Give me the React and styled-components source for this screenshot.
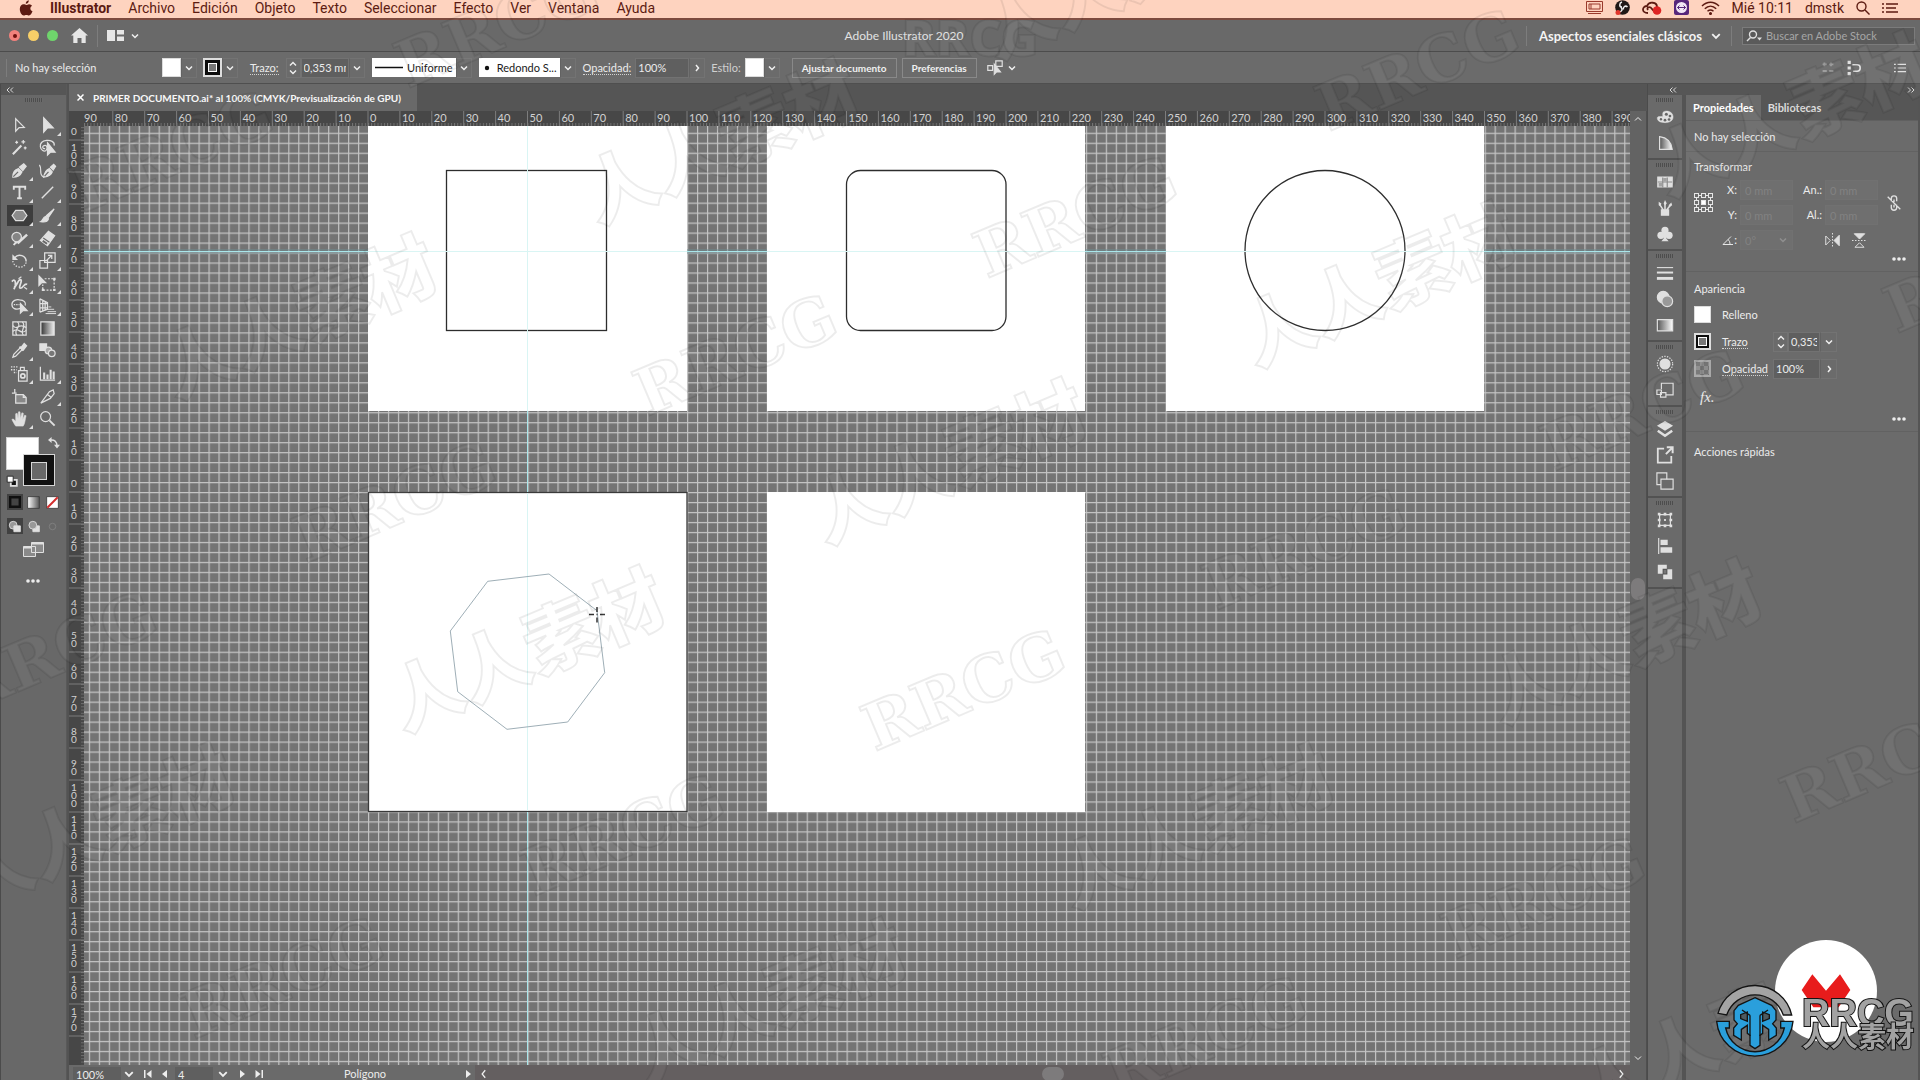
import React from "react";
import styled, { createGlobalStyle, css } from "styled-components";

const Global = createGlobalStyle`
  * { box-sizing: border-box; }
  html, body { margin: 0; height: 100%; background: #6a6a6a; overflow: hidden; }
  #root { height: 100%; }
  body, button, input, select { font-family: Lato, "Open Sans", "Noto Sans CJK SC", sans-serif; font-size: 11px; color: #ececec; }
  button { background: none; border: 0; padding: 0; margin: 0; }
  input { margin: 0; outline: 0; min-width: 0; }
  svg { display: block; flex: none; }
`;

const Shell = styled.div`
  height: 100vh;
  display: flex;
  flex-direction: column;
  line-height: 14px;
`;

/* ---------- system menu bar ---------- */
const MenuBar = styled.nav`
  height: 20px;
  flex: none;
  display: flex;
  align-items: center;
  padding: 0 21px 3px 19px;
  background: #fed3bf;
  border-bottom: 2px solid #7c4a3e;
`;
const MenuItem = styled.button`
  font-family: Roboto, sans-serif;
  font-size: 14px;
  line-height: 16px;
  color: #5c1b12;
  margin-right: 17px;
  font-weight: ${(p) => (p.$bold ? 700 : 400)};
`;
const MenuTray = styled.div`
  margin-left: auto;
  display: flex;
  align-items: center;
  gap: 12px;
  color: #5c1b12;
  font-family: Roboto, sans-serif;
  font-size: 14px;
`;

/* ---------- title bar ---------- */
const TitleBar = styled.header`
  height: 32px;
  flex: none;
  display: grid;
  grid-template-columns: 1fr auto 1fr;
  align-items: center;
  background: #696969;
  border-bottom: 1px solid #4c4c4c;
`;
const TitleLeft = styled.div`
  display: flex;
  align-items: center;
  padding-left: 9px;
`;
const Light = styled.button`
  width: 11px;
  height: 11px;
  border-radius: 50%;
  margin-right: 8px;
  background: ${(p) => p.$color};
  display: grid;
  place-items: center;
  &::after {
    content: "";
    width: 4px;
    height: 4px;
    border-radius: 50%;
    background: ${(p) => p.$dot || "transparent"};
  }
`;
const Title = styled.h1`
  margin: 0 112px 0 0;
  font-size: 12px;
  font-weight: 400;
  color: #e2e2e2;
`;
const TitleRight = styled.div`
  display: flex;
  justify-content: flex-end;
  align-items: center;
  padding-right: 5px;
`;
const VRule = styled.span`
  width: 1px;
  height: ${(p) => p.$h || 20}px;
  background: #7d7d7d;
  margin: 0 ${(p) => p.$gap || 9}px;
`;
const Workspace = styled.button`
  display: flex;
  align-items: center;
  gap: 9px;
  font-size: 13px;
  font-weight: 700;
  color: #f4f4f4;
`;
const StockSearch = styled.label`
  width: 173px;
  height: 18px;
  display: flex;
  align-items: center;
  gap: 3px;
  padding-left: 3px;
  background: #5a5a5a;
  border: 1px solid #7b7b7b;
  input {
    flex: 1;
    background: none;
    border: 0;
    padding: 0;
    color: #ddd;
    font-size: 11px;
  }
  input::placeholder { color: #a6a6a6; opacity: 1; }
`;

/* ---------- control bar ---------- */
const ControlBar = styled.div`
  height: 32px;
  flex: none;
  display: flex;
  align-items: center;
  padding: 0 14px 0 5px;
  background: #6b6b6b;
  border-bottom: 1px solid #4f4f4f;
`;
const StatusText = styled.span`
  width: 147px;
  padding-left: 7px;
`;
const Swatch = styled.button`
  width: ${(p) => p.$size || 19}px;
  height: ${(p) => p.$size || 19}px;
  flex: none;
  background: #fff;
  border: 1px solid #dcdcdc;
  ${(p) =>
    p.$stroke &&
    css`
      background: #0c0c0c;
      border: 2px solid #dedede;
      display: grid;
      place-items: center;
      &::after {
        content: "";
        width: 7px;
        height: 7px;
        border: 1px solid #fff;
        background: #777;
      }
    `}
`;
const Drop = styled.button`
  width: ${(p) => p.$w || 16}px;
  height: 20px;
  flex: none;
  display: grid;
  place-items: center;
  border: 1px solid #737373;
  border-left-color: #626262;
`;
const Spin = styled.button`
  width: 15px;
  height: 20px;
  flex: none;
  display: grid;
  place-items: center;
  border: 1px solid #747474;
`;
const Field = styled.input`
  width: ${(p) => p.$w}px;
  height: 20px;
  padding: 0 2px;
  background: #5f5f5f;
  border: 1px solid #727272;
  &:disabled {
    padding-left: 4px;
    background: #6f6f6f;
    color: #828282;
    border-color: #717171;
  }
`;
const Dotted = styled.label`
  border-bottom: 1px dotted #d2d2d2;
  line-height: 13px;
`;
const Plain = styled.span`
  color: #d0d0d0;
`;
const WhiteCombo = styled.button`
  width: ${(p) => p.$w}px;
  height: 19px;
  display: flex;
  align-items: center;
  justify-content: space-between;
  padding: 0 3px;
  background: #fff;
  color: #1a1a1a;
`;
const BarButton = styled.button`
  height: 20px;
  padding: 0 9px;
  border: 1px solid #898989;
  font-size: 10px;
  font-weight: 700;
  color: #f0f0f0;
`;
const Gap = styled.span`
  width: ${(p) => p.$w}px;
  flex: none;
`;
const BarRight = styled.div`
  margin-left: auto;
  display: flex;
  align-items: center;
  gap: 12px;
`;

/* ---------- body columns ---------- */
const Body = styled.div`
  flex: 1;
  min-height: 0;
  display: flex;
  background: #535353;
`;
const Tools = styled.aside`
  width: 67px;
  flex: none;
  background: #686868;
  border-left: 1px solid #4b4b4b;
  border-right: 1px solid #595959;
  display: flex;
  flex-direction: column;
  align-items: center;
`;
const Collapse = styled.div`
  height: 11px;
  flex: none;
  width: 100%;
  background: #565656;
  display: flex;
  align-items: center;
  padding: 0 5px;
  justify-content: ${(p) => p.$justify || "flex-start"};
`;
const Grip = styled.span`
  height: 4px;
  width: 18px;
  flex: none;
  margin-top: ${(p) => p.$top}px;
  background: repeating-linear-gradient(90deg, #4d4d4d 0 1px, #6b6b6b 1px 2px);
`;
const ToolGrid = styled.div`
  display: grid;
  grid-template-columns: 28px 28px;
  grid-auto-rows: 1fr;
  height: 316px;
  margin-top: 12px;
`;
const Tool = styled.button`
  position: relative;
  display: grid;
  place-items: center;
  margin: 1px;
  background: ${(p) => (p.$active ? "#3d3d3d" : "none")};
  ${(p) =>
    p.$more &&
    css`
      &::after {
        content: "";
        position: absolute;
        right: 0;
        bottom: 0;
        border: 2px solid;
        border-color: transparent #dedede #dedede transparent;
      }
    `}
`;
const FillStroke = styled.div`
  position: relative;
  width: 56px;
  height: 57px;
  margin-top: 7px;
`;
const FillBox = styled.button`
  position: absolute;
  left: 0;
  top: 0;
  width: 33px;
  height: 33px;
  background: #fff;
  border: 1px solid #cfcfcf;
`;
const StrokeBox = styled.button`
  position: absolute;
  left: 17px;
  top: 17px;
  width: 32px;
  height: 32px;
  background: #111;
  border: 1px solid #d6d6d6;
  padding: 7px;
  &::after {
    content: "";
    display: block;
    height: 16px;
    border: 1px solid #d6d6d6;
    background: #686868;
  }
`;
const Swap = styled.button`
  position: absolute;
  right: 2px;
  top: 0;
`;
const Default = styled.button`
  position: absolute;
  left: 0;
  bottom: 7px;
`;
const ModeRow = styled.div`
  display: flex;
  gap: 3px;
  height: 16px;
  margin-bottom: 8px;
`;
const Mode = styled.button`
  width: 16px;
  height: 16px;
  display: grid;
  place-items: center;
  background: ${(p) => (p.$active ? "#414141" : "none")};
`;
const ToolsMore = styled.button`
  margin-top: 22px;
`;

/* ---------- document ---------- */
const Doc = styled.main`
  flex: 1;
  min-width: 0;
  margin-left: 2px;
  display: flex;
  flex-direction: column;
`;
const DocTabs = styled.div`
  height: 27px;
  flex: none;
  display: flex;
  background: #555;
`;
const DocTab = styled.div`
  display: flex;
  align-items: center;
  gap: 9px;
  padding: 0 16px 0 8px;
  background: #696969;
  font-size: 10px;
  font-weight: 700;
  color: #f8f8f8;
  white-space: nowrap;
`;
const DocArea = styled.div`
  flex: 1;
  min-height: 0;
  display: grid;
  grid-template-columns: 15px 1fr 17px;
  grid-template-rows: 15px 1fr 15px;
  svg { width: 100%; height: 100%; }
`;
const Corner = styled.div`
  background: #484848;
`;
const Pane = styled.div`
  min-width: 0;
  min-height: 0;
  overflow: hidden;
  background: ${(p) => p.$bg};
`;
const RulerText = styled.text`
  font-family: Lato, sans-serif;
  font-size: ${(p) => p.$size}px;
  fill: #d2d2d2;
`;
const VScroll = styled.div`
  grid-column: 3;
  grid-row: 1 / span 3;
  background: #636363;
  display: flex;
  flex-direction: column;
  align-items: center;
  justify-content: space-between;
  padding: 4px 0 18px;
  border-right: 1px solid #4f4f4f;
  svg { width: 8px; height: 8px; }
`;
const Thumb = styled.span`
  width: ${(p) => p.$w}px;
  height: ${(p) => p.$h}px;
  border-radius: 8px;
  background: #7d7b7c;
`;
const StatusBar = styled.div`
  grid-column: 1 / span 2;
  display: grid;
  grid-template-columns: 406px 1fr;
  background: #6a6a6a;
  svg { width: 10px; height: 10px; }
`;
const StatusLeft = styled.div`
  display: flex;
  align-items: center;
  padding-left: 4px;
  padding-top: 2px;
`;
const StatusField = styled.input`
  width: ${(p) => p.$w}px;
  height: 14px;
  padding: 0 3px;
  border: 0;
  background: #5f5f5f;
`;
const StatusBtn = styled.button`
  width: ${(p) => p.$w || 16}px;
  display: grid;
  place-items: center;
`;
const StatusTool = styled.span`
  width: 196px;
  text-align: center;
`;
const HScroll = styled.div`
  background: #645f60;
  display: flex;
  align-items: center;
  justify-content: space-between;
  padding: 2px 4px 0;
`;

/* ---------- right side ---------- */
const Side = styled.aside`
  width: 273px;
  flex: none;
  display: flex;
  flex-direction: column;
  border-left: 1px solid #4b4b4b;
`;
const SideTop = styled.div`
  display: grid;
  grid-template-columns: 34px 1fr;
`;
const SideBody = styled.div`
  flex: 1;
  min-height: 0;
  display: grid;
  grid-template-columns: 34px 1fr;
  column-gap: 4px;
  background: #545454;
`;
const Dock = styled.div`
  background: #6a6a6a;
`;
const DockGroup = styled.div`
  display: flex;
  flex-direction: column;
  align-items: center;
  padding: 3px 0 2px;
  border-bottom: 2px solid #525252;
`;
const DockButtons = styled.div`
  width: 100%;
  margin-top: 2px;
`;
const DockButton = styled.button`
  width: 100%;
  height: 26px;
  display: grid;
  place-items: center;
`;
const Panel = styled.div`
  background: #6b6b6b;
  border-right: 2px solid #555;
`;
const PanelTabs = styled.div`
  height: 26px;
  display: flex;
  background: #565656;
  border-bottom: 1px solid #606060;
`;
const PanelTab = styled.button`
  padding: 0 7px;
  font-weight: 700;
  color: ${(p) => (p.$active ? "#fff" : "#dcdcdc")};
  background: ${(p) => (p.$active ? "#6b6b6b" : "none")};
`;
const Section = styled.section`
  padding: ${(p) => p.$pad};
  border-bottom: ${(p) => (p.$last ? 0 : 1)}px solid #626262;
`;
const SectionTitle = styled.h2`
  margin: 0;
  font-size: 11px;
  font-weight: 400;
`;
const TransformGrid = styled.div`
  display: grid;
  grid-template-columns: 20px 20px 53px 26px 53px 1fr;
  grid-template-rows: 20px 20px 20px;
  row-gap: 5px;
  column-gap: 3px;
  align-items: center;
  margin: 6px 0 2px;
`;
const FieldLabel = styled.label`
  grid-column: ${(p) => p.$col};
  display: flex;
  justify-content: flex-end;
  align-items: center;
  gap: 1px;
`;
const Span2 = styled.button`
  grid-row: 1 / span 2;
  grid-column: ${(p) => p.$col};
  justify-self: start;
  padding-left: ${(p) => (p.$col === 6 ? 4 : 0)}px;
`;
const AngleBox = styled.div`
  position: relative;
  svg { position: absolute; right: 6px; top: 6px; opacity: 0.25; }
`;
const Flips = styled.div`
  grid-column: 5;
  display: flex;
  gap: 12px;
`;
const MoreRow = styled.div`
  height: 14px;
  display: flex;
  justify-content: flex-end;
  align-items: center;
  padding-right: 11px;
`;
const LookRows = styled.div`
  padding-top: 5px;
`;
const LookRow = styled.div`
  height: 27px;
  display: flex;
  align-items: center;
`;
const LookLabel = styled.div`
  width: 51px;
  margin-left: 11px;
`;
const Fx = styled.button`
  height: 30px;
  padding-left: 6px;
  font-family: "Liberation Serif", serif;
  font-style: italic;
  font-size: 15px;
`;
const Checker = styled.button`
  width: 17px;
  height: 17px;
  flex: none;
  border: 2px solid #a8a8a8;
  background: repeating-conic-gradient(#8c8c8c 0 25%, #747474 0 50%) 0 0 / 8px 8px;
`;

/* ---------- overlays ---------- */
const Marks = styled.svg`
  position: fixed;
  inset: 0;
  width: 100%;
  height: 100%;
  pointer-events: none;
`;
const MARK_FONT = {
  slab: ['"DejaVu Serif", serif', 64],
  sans: ['"Noto Sans", sans-serif', 50],
  cjk: ['"Noto Sans CJK SC", sans-serif', 73],
};
const MarkText = styled.text`
  font-family: ${(p) => MARK_FONT[p.$kind][0]};
  font-size: ${(p) => MARK_FONT[p.$kind][1]}px;
  font-weight: 900;
  text-anchor: middle;
  fill: rgba(255, 255, 255, 0.045);
  stroke: rgba(0, 0, 0, 0.075);
  stroke-width: 2px;
`;
const Brand = styled.svg`
  position: fixed;
  right: 0;
  bottom: 0;
  pointer-events: none;
`;
const BrandText = styled.text`
  font-family: "Liberation Sans", "Noto Sans CJK SC", sans-serif;
  font-weight: 700;
  font-size: ${(p) => p.$size}px;
  fill: #a2a2a2;
  stroke: #141414;
  stroke-width: 2px;
  paint-order: stroke;
`;

/* ---------- icons ---------- */
const Ic = ({ s = 20, c = "#e0e0e0", w = 1.3, children }) => (
  <svg width={s} height={s} viewBox="0 0 20 20" fill="none" stroke={c} strokeWidth={w} aria-hidden="true">
    {children}
  </svg>
);
const Chev = ({ d = "down", s = 8, w = 1.5 }) => {
  const paths = { down: "M1 2.5 4 5.5 7 2.5", up: "M1 5.5 4 2.5 7 5.5", right: "M3 1 5.5 4 3 7", left: "M5 1 2.5 4 5 7" };
  return (
    <svg width={s} height={s} viewBox="0 0 8 8" fill="none" stroke="#f0f0f0" strokeWidth={w} aria-hidden="true">
      <path d={paths[d]} />
    </svg>
  );
};
const SpinIcon = () => (
  <svg width="8" height="14" viewBox="0 0 8 14" fill="none" stroke="#f0f0f0" strokeWidth="1.4" aria-hidden="true">
    <path d="M1 4.5 4 1.5 7 4.5M1 9.5 4 12.5 7 9.5" />
  </svg>
);
const Double = ({ flip }) => (
  <svg width="8" height="6" viewBox="0 0 8 6" fill="none" stroke="#d8d8d8" aria-hidden="true">
    <path d={flip ? "M1 .5 3.5 3 1 5.5M4.500 .5 7 3 4.500 5.500" : "M3.500 .5 1 3 3.500 5.500M7 .5 4.500 3 7 5.500"} />
  </svg>
);
const Dots = () => (
  <svg width="15" height="4" viewBox="0 0 15 4" fill="#ededed" aria-hidden="true">
    <circle cx="2" cy="2" r="1.800" />
    <circle cx="7" cy="2" r="1.800" />
    <circle cx="12" cy="2" r="1.800" />
  </svg>
);
const L = "#e0e0e0";

const TOOLS = [
  ["Selección", 0, <path d="M6 3v13l3.600-3.800L15 12z" />],
  ["Selección directa", 1, <path d="M6 2v15l4-4.500h6z" fill={L} />],
  ["Varita mágica", 0, <><path d="M3 17 12 8" strokeWidth="2.200" /><path d="M14 2v4M12 4h4M7 3v3M5.500 4.500h3M16 9v3M14.500 10.500h3" /></>],
  ["Lazo", 0, <><path d="M17 8c1-4-4-6-8-5.500S2 5 2.500 9s4 6 6 4 1-6-2-5-1 4 1 3" /><path d="M10 5v13l3-3h5z" fill={L} /></>],
  ["Pluma", 1, <><path d="M3 17c0-5 2-8 6-9l3.500 3.500C11 15 8 17 3 17z" fill={L} /><path d="M10 6.500 13.500 10 17 5.500 14.500 3z" fill={L} /><path d="m3.500 16.500 5-5" stroke="#686868" /></>],
  ["Curvatura", 0, <><path d="M6 17c1-5 3-8 6-9l3 3.500C14 15 11 16.500 6 17z" fill={L} /><path d="M13 6.500 16 9.500 18.500 5.500 16.500 3.500z" fill={L} /><path d="M6 17C0 14 5 9 1.500 4" /><path d="m7 16 4-4.500" stroke="#686868" /></>],
  ["Texto", 1, <path d="M4 7V4h12v3M10 4v12M7.500 16h5" strokeWidth="2" />],
  ["Línea", 1, <path d="M4 16 16 4" strokeWidth="1.500" />],
  ["Polígono", 1, <path d="M6 4.500h8l3.800 5.500-3.800 5.500H6L2.200 10z" fill="#8c8c8c" />, true],
  ["Pincel", 1, <><path d="M17 3 9 10l2 2z" fill={L} /><path d="M8.500 11 11 13.500C10 17 6 17 3 16.500c2-1 2-5 5.500-5.500z" fill={L} /></>],
  ["Forma", 1, <><circle cx="7" cy="8.500" r="5" fill="#858585" /><path d="m8 15 10-9" strokeWidth="2.600" /><path d="M4 17c1-2 2-3 4-3" strokeWidth="2" /></>],
  ["Borrador", 1, <><path d="M2.500 12 11 2.500l6.500 4.500L10 17.500z" fill={L} /><path d="m5.500 9.500 6.500 4.500" stroke="#686868" /><path d="m5 12.500 4.500 3" stroke="#686868" strokeWidth="2" /></>],
  ["Rotar", 1, <><path d="M5 7c4-5 12-2 12 4" strokeWidth="1.600" /><path d="M17 12c-1 4-5 6-9 4.500S3 12 3 10" strokeDasharray="1.500 1.500" /><path d="M2.500 3.500v6h6z" fill={L} stroke="none" /></>],
  ["Escala", 1, <><path d="M7 2h11v10H7z" /><path d="M2 10h8v8H2zM9 10l5-5M10.500 4.500h4v4" /></>],
  ["Anchura", 1, <><path d="M2 8c4-5 5 4 2 8M4 14c3 0 4-8 7-8s-3 9 0 9 4-6 7-4" strokeWidth="1.800" /><path d="m9 5 3-2M15 14l3 2" /></>],
  ["Transformación libre", 1, <><path d="M7 5h10v12H5v-6" strokeDasharray="2 1.500" /><path d="M1 2v10l3-3h4z" fill={L} /><path d="M16 4h2.500v2.500H16zM16 15.500h2.500V18H16zM4 15.500h2.500V18H4z" fill={L} stroke="none" /></>],
  ["Creador de formas", 1, <><path d="M11 13c-5 2-9 0-9-4s5-6 8-5c5 0 7 3 6 6" /><path d="M4 9h6" strokeDasharray="1.500 1" /><path d="M11 8v10l2.700-2.700H18z" fill={L} /></>],
  ["Perspectiva", 1, <><path d="M2 3v14M2 3l8 4v7l-8 3M5 4.500v11M7.500 6v8.500M2 8h8M2 12.500h8" /><path d="M10 16.500h9M10 14h7M11 11.500h3M8 18.500h11" strokeWidth="1" /></>],
  ["Malla", 0, <><path d="M3 3h14v14H3z" /><path d="M3 7c5 6 6-4 14 2M3 13c6-6 8 5 14-1M8 3c5 6-5 7-1 14M13 3c5 5-3 9 1 14" /></>],
  ["Degradado", 0, <><defs><linearGradient id="gt"><stop stopColor="#333" /><stop offset="1" stopColor="#eee" /></linearGradient></defs><path d="M3 3h14v14H3z" fill="url(#gt)" /></>],
  ["Cuentagotas", 1, <><path d="M3 17l1-3 7-7 2 2-7 7z" /><path d="m10 6 4 4M12 7l3-4 2 2-3 4z" strokeWidth="2" fill={L} /></>],
  ["Fusión", 0, <><path d="M2 3h7v7H2z" fill={L} /><circle cx="11" cy="10" r="3.500" fill="#aaa" /><circle cx="14.500" cy="13" r="3.500" fill="#777" /></>],
  ["Rociar símbolos", 1, <><path d="M9 7h9v11H9zM11 7V3.500h4V7" /><circle cx="13.500" cy="12.500" r="2.200" strokeWidth="1.800" /><path d="M1 3h8M1 6h6M4 9h3" strokeDasharray="1.500 1.200" strokeWidth="1.500" /></>],
  ["Gráfica", 1, <><path d="M2.500 3v14H18" /><path d="M6.500 16V9M10 16V11M13.300 16V6M16.500 16V8" strokeWidth="2.200" /></>],
  ["Mesa de trabajo", 0, <path d="M5 2v4M2 6.500h5M6 8h8l3 3v6H6zM14 8v3h3" fill="#888" />],
  ["Sector", 1, <path d="M3 17 12 5l4-2 1 4-4 5zM10 8l4 3" />],
  ["Mano", 1, <path d="M6 18c-2-3-3-5-4-7l1.500-.5L6 13V5l1.500-.5L8.500 10 9 3h1.500l.6 7 1.400-6 1.500.4-.6 6.600 2-4.500 1.500.5c-1 4-1 8-3 11z" fill={L} strokeWidth=".6" />],
  ["Zoom", 0, <><circle cx="8" cy="8" r="5.200" /><path d="m12 12 5.500 5.500" strokeWidth="2" /></>],
];

const DOCK = [
  [
    ["Color", <><path d="M10.500 3.500C15.500 3 19 6 19 10c0 5-6 7-11 6-5 0-7-3-6.500-5.500C3 8 7 11 7.500 8.500 7.500 6 7 4 10.500 3.500z" fill={L} strokeWidth=".5" /><g fill="#666" stroke="none"><circle cx="11.500" cy="7" r="1.700" /><circle cx="15.500" cy="9" r="1.500" /><circle cx="14.500" cy="12.800" r="1.500" /><circle cx="10" cy="13.500" r="1.500" /><circle cx="5.500" cy="12.500" r="1.300" /></g></>],
    ["Guía de color", <><defs><linearGradient id="gc"><stop stopColor="#555" /><stop offset="1" stopColor="#fff" /></linearGradient></defs><path d="M4 3v14h14C17 9 12 4 4 3z" fill="url(#gc)" /></>],
  ],
  [
    ["Muestras", <><path d="M2 4.500h16v11H2z" fill={L} /><path d="M2 10h16M7.500 5v11M12.500 5v11" stroke="#8a8a8a" /><path d="M8 5.500h4v4H8zM3 11h4v4H3z" fill="#a2a2a2" stroke="none" /></>],
    ["Pinceles", <><path d="M6 12h8v6H6z" fill={L} /><path d="M8 12 4 6M10 12V4M12 12l4-5" strokeWidth="1.700" /><path d="M3 3l3 2-1 3-2-1zM10 1l2 4-2 2-1.500-2zM17 4l-3 3 1 2 3-2z" fill={L} stroke="none" /></>],
    ["Símbolos", <g fill={L} stroke="none"><circle cx="10" cy="6" r="4" /><circle cx="5.500" cy="11.500" r="4" /><circle cx="14.500" cy="11.500" r="4" /><path d="M9 9h2l.5 6 2.500 3H6l2.500-3z" /></g>],
  ],
  [
    ["Trazo", <><path d="M1 4h18" strokeWidth="1.200" /><path d="M1 9.500h18" strokeWidth="2.200" /><path d="M1 16h18" strokeWidth="3.200" /></>],
    ["Transparencia", <><circle cx="8" cy="8" r="6.500" fill={L} /><circle cx="12.500" cy="12.500" r="6" fill="#999" /></>],
    ["Degradado", <><defs><linearGradient id="gd"><stop stopColor="#555" /><stop offset="1" stopColor="#fff" /></linearGradient></defs><path d="M1.500 4h17v12.500h-17z" fill="url(#gd)" /></>],
  ],
  [
    ["Apariencia", <><circle cx="10" cy="10" r="5.500" fill={L} /><circle cx="10" cy="10" r="8.500" strokeDasharray="1.500 1.500" /></>],
    ["Estilos gráficos", <path d="M6 9V2.500h13v13h-8M1 10h5v5H1zM5 13h6v5H5z" />],
  ],
  [
    ["Capas", <><path d="M10 1 19 6.500 10 12 1 6.500z" fill={L} stroke="none" /><path d="m2 12 8 5.500 8-5.500" strokeWidth="2.800" /></>],
    ["Exportar", <><path d="M9 3H2v15.500h15V11" strokeWidth="2" /><path d="M12 1.500h6.500V8M18 2l-7 7" strokeWidth="2.200" /></>],
    ["Mesas", <><path d="M5.500 14H1V1h11v7" /><path d="M5.500 8H19v11H5.500z" /></>],
  ],
  [
    ["Transformar", <><path d="M4 4h12v12H4z" /><path d="M2 2h3v3H2zM8.500 2h3v3h-3zM15 2h3v3h-3zM2 8.500h3v3H2zM15 8.500h3v3h-3zM2 15h3v3H2zM8.500 15h3v3h-3zM15 15h3v3h-3zM9 9h2v2H9z" fill={L} stroke="none" /></>],
    ["Alinear", <><path d="M3 1v18" /><path d="M5 3h8v6H5zM5 11.500h13v6H5z" fill={L} stroke="none" /></>],
    ["Buscatrazos", <><path d="M2 2h10v5h6v11H8v-6H2z" fill={L} stroke="none" /><path d="M8 7h4v5H8z" fill="#777" stroke="#555" /></>],
  ],
];

/* ---------- canvas geometry, in px from the canvas corner ---------- */
const MM = 3.19;
const GRID = 9.97;
const OX = 284;
const OY = 366;
const BOARDS = [
  [284, -34, 319, 319],
  [683, -34, 318, 319],
  [1082, -34, 318, 319],
];

const Canvas = () => (
  <svg aria-label="Mesas de trabajo">
    <defs>
      <pattern id="grid" x={OX} y={OY} width={GRID} height={GRID + 0.01} patternUnits="userSpaceOnUse">
        <path d="M0.600 0V10M0 0.600H10" stroke="#c4c4c4" strokeWidth="1.200" fill="none" />
      </pattern>
    </defs>
    <rect width="100%" height="100%" fill="#747474" />
    <rect width="100%" height="100%" fill="url(#grid)" />
    {BOARDS.map(([x, y, w, h]) => (
      <rect key={x} x={x} y={y} width={w} height={h} fill="#fff" />
    ))}
    <rect x="284.500" y="366.500" width="318.500" height="319" fill="#fff" stroke="#3a3a3a" strokeWidth="1.300" />
    <rect x="683" y="366" width="318" height="320" fill="#fff" />
    <g fill="none" stroke="#2d2d2d" strokeWidth="1.300">
      <rect x="362.500" y="44.500" width="160" height="160" />
      <rect x="762.500" y="44.500" width="159.500" height="160" rx="14" />
      <circle cx="1241" cy="124.500" r="80" />
    </g>
    <path d="M0 125.500H284M603 125.500H683M1001 125.500H1082M1400 125.500H4000" stroke="#6f8d92" strokeWidth="5" opacity=".45" />
    <path d="M0 125.500H284M603 125.500H683M1001 125.500H1082M1400 125.500H4000M443.500 285V366M443.500 686V4000" stroke="#a9e6ea" fill="none" />
    <path d="M284 125.500H603M683 125.500H1001M1082 125.500H1400M443.500 0V285M443.500 367V685" stroke="#d9f5f4" fill="none" />
    <path
      d="M403.700 455.300 465 448 513 484.700 520.700 546.700 483.700 596 423 603.300 373.700 565.700 366.300 505z"
      fill="none"
      stroke="#93a5ae"
      strokeWidth=".9"
    />
    <path d="M505 488.500h5M516 488.500h5M513 481v5M513 491.500v5M512.500 488.500h1" stroke="#333" strokeWidth="1.500" />
  </svg>
);

const HRuler = () => {
  const marks = [];
  for (let n = -8; n <= 39; n++) marks.push(n);
  return (
    <svg aria-hidden="true">
      <defs>
        <pattern id="hm" x={OX} y="0" width={MM} height="15" patternUnits="userSpaceOnUse">
          <path d="M.5 12V15" stroke="#7c7c7c" strokeWidth=".8" />
        </pattern>
      </defs>
      <rect width="100%" height="15" fill="url(#hm)" />
      <RulerText $size={11} x="0" y="11">90</RulerText>
      {marks.map((n) => (
        <g key={n}>
          <path d={`M${OX + n * MM * 10} 0V15`} stroke="#7d7d7d" />
          <RulerText $size={11} x={OX + n * MM * 10 + 2} y="11">{Math.abs(n) * 10}</RulerText>
        </g>
      ))}
    </svg>
  );
};

const VRuler = () => {
  const marks = [];
  for (let n = -11; n <= 17; n++) marks.push(n);
  return (
    <svg aria-hidden="true">
      <defs>
        <pattern id="vm" x="0" y={OY} width="15" height="3.200" patternUnits="userSpaceOnUse">
          <path d="M12 .5H15" stroke="#7c7c7c" strokeWidth=".8" />
        </pattern>
      </defs>
      <rect width="15" height="100%" fill="url(#vm)" />
      {marks.map((n) => {
        const y = OY + n * 32;
        const all = String(Math.abs(n) * 10).split("");
        const digits = n === -11 ? all.slice(2) : all;
        return (
          <g key={n}>
            <path d={`M0 ${y}H15`} stroke="#7d7d7d" />
            {digits.map((d, i) => (
              <RulerText $size={10} key={i} x="2" y={y - 5 - (digits.length - 1 - i) * 8}>{d}</RulerText>
            ))}
          </g>
        );
      })}
    </svg>
  );
};

const MARKS = [
  ["slab", 171, 150], ["slab", 496, 25], ["slab", 55, 650], ["slab", 394, 500], ["slab", 735, 353], ["slab", 1075, 215],
  ["slab", 1417, 68], ["slab", 282, 976], ["slab", 622, 833], ["slab", 963, 688], ["slab", 1304, 547], ["slab", 1642, 408],
  ["slab", 1205, 1035], ["slab", 1543, 896], ["slab", 1882, 760], ["slab", 1985, 270],
  ["cjk", 300, 320], ["cjk", 722, 145], ["cjk", 1120, -20], ["cjk", 98, 830], ["cjk", 528, 653], ["cjk", 950, 465],
  ["cjk", 1380, 288], ["cjk", 1792, 118], ["cjk", 770, 1005], ["cjk", 1197, 830], ["cjk", 1625, 645], ["cjk", 1715, 1040],
];

const MENUS = ["Archivo", "Edición", "Objeto", "Texto", "Seleccionar", "Efecto", "Ver", "Ventana", "Ayuda"];
const M = "#5c1b12";

export default function App() {
  return (
    <Shell>
      <Global />
      <MenuBar>
        <MenuItem aria-label="Apple">
          <svg width="14" height="16" viewBox="0 0 14 16" fill={M}>
            <path d="M10 4.200c1.500 0 2.500.8 3 1.600-2.400 1.500-2 4.500.5 5.500C12.700 13.500 11.500 15.500 10 15.500c-1 0-1.400-.6-2.600-.6s-1.700.6-2.600.6C2.700 15.500.8 12 .8 9c0-3 1.900-4.700 3.800-4.700 1.200 0 2 .7 2.800.7.700 0 1.500-.8 2.600-.8zM9.800.3c.2 1.800-1.200 3.500-3 3.500C6.600 2.200 8 .5 9.800.3z" />
          </svg>
        </MenuItem>
        <MenuItem $bold>Illustrator</MenuItem>
        {MENUS.map((m) => (
          <MenuItem key={m}>{m}</MenuItem>
        ))}
        <MenuTray>
          <svg width="17" height="13" viewBox="0 0 17 13" fill="none" stroke="#9a3a2c"><path d="M.5.500h16v10H.5zM3 3h11v5H3zM5 3v5" /><path d="M2 12.500h13" /></svg>
          <svg width="15" height="15" viewBox="0 0 15 15"><circle cx="7.500" cy="7.500" r="7.300" fill="#201816" /><path d="M7 2c-3 1-3 5 0 5M12.500 7c-2-2-5 0-4 2.500M4 12c3 0 4-3 2-4.500" stroke="#eee" fill="none" strokeWidth="1.500" /><circle cx="3" cy="12.500" r="2.500" fill="#e2362c" /></svg>
          <svg width="20" height="14" viewBox="0 0 20 14"><path d="M6 12C-1 12 0 5 5 5c2-5 10-4 10 1M6 9c-2-3 2-4 4-1s4 1 3-1" fill="none" stroke={M} strokeWidth="1.800" /><circle cx="15" cy="9.500" r="4.300" fill="#dd2424" /></svg>
          <svg width="15" height="15" viewBox="0 0 15 15"><rect width="15" height="15" rx="2" fill="#57267b" /><circle cx="7.500" cy="7.500" r="5.500" fill="#f1e6f5" /><path d="M3.500 7.500h8M5.500 5.500l-2 2 2 2M9.500 5.500l2 2-2 2" stroke="#57267b" fill="none" /></svg>
          <svg width="19" height="14" viewBox="0 0 19 14" fill="none" stroke={M} strokeWidth="1.500"><path d="M1 5c5-5 12-5 17 0M3.800 7.800c3.400-3.300 8-3.300 11.400 0M6.500 10.300c2-1.700 4-1.700 6 0" /><circle cx="9.500" cy="12.500" r=".8" fill={M} /></svg>
          <span>Mié 10:11</span>
          <span>dmstk</span>
          <svg width="14" height="14" viewBox="0 0 14 14" fill="none" stroke={M} strokeWidth="1.400"><circle cx="5.500" cy="5.500" r="4.500" /><path d="m9 9 4.500 4.500" /></svg>
          <svg width="17" height="12" viewBox="0 0 17 12" stroke={M} strokeWidth="1.700"><path d="M0 2h2M4 2h12M0 6h2M4 6h10M0 10h2M4 10h12" /></svg>
        </MenuTray>
      </MenuBar>

      <TitleBar>
        <TitleLeft>
          <Light $color="#f2817c" $dot="#6d0f0d" aria-label="Cerrar ventana" />
          <Light $color="#f8cf68" aria-label="Minimizar" />
          <Light $color="#6fd46c" aria-label="Ampliar" />
          <Gap $w={5} />
          <button aria-label="Inicio">
            <svg width="17" height="15" viewBox="0 0 17 15" fill="#e6e6e6"><path d="M8.500 0 17 7.500h-2.300V15h-4.200v-5h-4v5H2.300V7.500H0z" /></svg>
          </button>
          <VRule $h={22} $gap={9} />
          <button aria-label="Organizar documentos">
            <svg width="17" height="11" viewBox="0 0 17 11" fill="#e6e6e6"><path d="M0 0h8v11H0zM10 0h7v4.500h-7zM10 6.500h7V11h-7z" /></svg>
          </button>
          <Gap $w={7} />
          <Chev />
        </TitleLeft>
        <Title>Adobe Illustrator 2020</Title>
        <TitleRight>
          <VRule $gap={12} />
          <Workspace>Aspectos esenciales clásicos <Chev s={10} /></Workspace>
          <VRule $gap={10} />
          <StockSearch>
            <svg width="17" height="12" viewBox="0 0 17 12" fill="none" stroke="#e0e0e0" strokeWidth="1.400"><circle cx="7" cy="4.500" r="3.500" /><path d="M4.500 7.500 1 11" /><path d="M11 7.500h5l-2.500 3z" fill="#e0e0e0" stroke="none" /></svg>
            <input aria-label="Buscar en Adobe Stock" placeholder="Buscar en Adobe Stock" />
          </StockSearch>
        </TitleRight>
      </TitleBar>

      <ControlBar>
        <VRule $h={18} $gap={1} />
        <StatusText>No hay selección</StatusText>
        <Gap $w={7} />
        <Swatch aria-label="Relleno" />
        <Drop aria-label="Opciones de relleno"><Chev /></Drop>
        <Gap $w={6} />
        <Swatch $stroke aria-label="Trazo" />
        <Drop aria-label="Opciones de trazo"><Chev /></Drop>
        <Gap $w={12} />
        <Dotted htmlFor="stroke-w">Trazo:</Dotted>
        <Gap $w={7} />
        <Spin aria-label="Ajustar trazo"><SpinIcon /></Spin>
        <Field id="stroke-w" $w={48} defaultValue="0,353 mm" />
        <Drop aria-label="Grosores"><Chev /></Drop>
        <Gap $w={7} />
        <WhiteCombo $w={84}>
          <svg width="28" height="3"><path d="M0 1.500h28" stroke="#111" strokeWidth="1.500" /></svg>
          Uniforme
        </WhiteCombo>
        <Drop aria-label="Perfiles"><Chev /></Drop>
        <Gap $w={7} />
        <WhiteCombo $w={81}>
          <svg width="10" height="6"><circle cx="5" cy="3" r="2.200" fill="#111" /></svg>
          Redondo S...
        </WhiteCombo>
        <Drop aria-label="Definición de pincel"><Chev /></Drop>
        <Gap $w={7} />
        <Dotted htmlFor="opacity">Opacidad:</Dotted>
        <Gap $w={4} />
        <Field id="opacity" $w={54} defaultValue="100%" />
        <Drop aria-label="Opacidad"><Chev d="right" /></Drop>
        <Gap $w={6} />
        <Plain>Estilo:</Plain>
        <Gap $w={4} />
        <Swatch aria-label="Estilo" />
        <Drop aria-label="Estilos"><Chev /></Drop>
        <Gap $w={12} />
        <BarButton>Ajustar documento</BarButton>
        <Gap $w={5} />
        <BarButton>Preferencias</BarButton>
        <Gap $w={10} />
        <button aria-label="Seleccionar similares"><Ic s={16}><path d="M1 7h6v6H1zM11 1h8v7h-8z" strokeWidth="1.500" /><path d="M9 5v13l3-3h5z" fill={L} /></Ic></button>
        <Gap $w={5} />
        <Chev />
        <BarRight>
          <Ic s={12} c="#9a9a9a" w={3}><path d="M1 4h7M12 4h7M1 15h7M12 15h7M4 1v6M15 1v6" /></Ic>
          <Ic s={16} w={2}><path d="M2 1h4v4H2zM2 8h4v4H2zM2 15h4v4H2z" fill={L} stroke="none" /><path d="M8 6h6c5 0 5 8 0 8H9" /></Ic>
          <Gap $w={8} />
          <Ic s={12} w={2}><path d="M0 4h3M6 4h14M0 10h3M6 10h14M0 16h3M6 16h14" /></Ic>
        </BarRight>
      </ControlBar>

      <Body>
        <Tools>
          <Collapse><Double /></Collapse>
          <Grip $top={3} />
          <ToolGrid>
            {TOOLS.map(([name, more, art, active]) => (
              <Tool key={name} aria-label={name} $more={!!more} $active={active}>
                <Ic s={19}>{art}</Ic>
              </Tool>
            ))}
          </ToolGrid>
          <FillStroke>
            <FillBox aria-label="Relleno" />
            <StrokeBox aria-label="Trazo" />
            <Swap aria-label="Intercambiar"><Ic s={12} w={2.500}><path d="M4 5c7-1 11 3 11 10" /><path d="M6 0v10L0 5zM10 13h10l-5 6z" fill={L} stroke="none" /></Ic></Swap>
            <Default aria-label="Por defecto"><Ic s={12} w={1.500}><path d="M8 8h10v10H8z" fill="#111" strokeWidth="3" /><path d="M2 2h10v10H2z" fill="#fff" stroke="#222" /></Ic></Default>
          </FillStroke>
          <ModeRow>
            <Mode $active aria-label="Color"><Ic s={12}><path d="M2 2h16v16H2z" fill="#444" stroke="#101010" strokeWidth="4" /></Ic></Mode>
            <Mode aria-label="Degradado"><Ic s={13}><defs><linearGradient id="gm"><stop stopColor="#fff" /><stop offset="1" stopColor="#555" /></linearGradient></defs><path d="M1 1h18v18H1z" fill="url(#gm)" stroke="#3a3a3a" /></Ic></Mode>
            <Mode aria-label="Ninguno"><Ic s={13}><path d="M1 1h18v18H1z" fill="#fff" stroke="#3a3a3a" /><path d="M2 18 18 2" stroke="#d32d2d" strokeWidth="3" /></Ic></Mode>
          </ModeRow>
          <ModeRow>
            <Mode $active aria-label="Dibujo normal"><Ic s={13}><circle cx="8" cy="8" r="6" fill="#999" /><path d="M9 9h10v9H9z" fill={L} /></Ic></Mode>
            <Mode aria-label="Dibujar detrás"><Ic s={13}><path d="M9 9h10v9H9z" fill={L} /><circle cx="9" cy="8" r="6" fill="#999" /></Ic></Mode>
            <Mode aria-label="Dibujar dentro"><Ic s={13} c="#828282"><circle cx="10" cy="10" r="5" /></Ic></Mode>
          </ModeRow>
          <button aria-label="Modo de pantalla">
            <svg width="21" height="15" viewBox="0 0 21 15" fill="#8a8a8a" stroke="#e0e0e0"><path d="M.5 4.500h12v10H.5zM8.500.5h12v10h-12z" /><path d="M8.500 1.500h12M.5 5.500h8" strokeWidth="2" /></svg>
          </button>
          <ToolsMore aria-label="Editar barra"><Dots /></ToolsMore>
        </Tools>

        <Doc>
          <DocTabs>
            <DocTab>
              <button aria-label="Cerrar documento"><svg width="7" height="7" viewBox="0 0 7 7" stroke="#fff" strokeWidth="1.500"><path d="m.5.500 6 6M6.500.500l-6 6" /></svg></button>
              PRIMER DOCUMENTO.ai* al 100% (CMYK/Previsualización de GPU)
            </DocTab>
          </DocTabs>
          <DocArea>
            <Corner />
            <Pane $bg="#474747"><HRuler /></Pane>
            <VScroll>
              <Chev d="up" w={1} />
              <Thumb $w={14} $h={22} />
              <Chev w={1} />
            </VScroll>
            <Pane $bg="#474747"><VRuler /></Pane>
            <Pane $bg="#747474"><Canvas /></Pane>
            <StatusBar>
              <StatusLeft>
                <StatusField aria-label="Zoom" $w={48} defaultValue="100%" />
                <StatusBtn aria-label="Niveles de zoom"><Chev /></StatusBtn>
                <Gap $w={4} />
                <StatusBtn aria-label="Primera"><svg viewBox="0 0 10 10" fill="#eee"><path d="M0 1h1.500v8H0zM7.500 1v8L2.500 5z" /></svg></StatusBtn>
                <StatusBtn aria-label="Anterior"><svg viewBox="0 0 10 10" fill="#eee"><path d="M7 1v8L2 5z" /></svg></StatusBtn>
                <Gap $w={2} />
                <StatusField aria-label="Mesa de trabajo" $w={38} defaultValue="4" />
                <StatusBtn $w={20} aria-label="Mesas de trabajo"><Chev /></StatusBtn>
                <StatusBtn $w={18} aria-label="Siguiente"><svg viewBox="0 0 10 10" fill="#eee"><path d="M3 1v8l5-4z" /></svg></StatusBtn>
                <StatusBtn aria-label="Última"><svg viewBox="0 0 10 10" fill="#eee"><path d="M1.500 1v8l5-4zM7.500 1H9v8H7.500z" /></svg></StatusBtn>
                <StatusTool>Polígono</StatusTool>
                <StatusBtn $w={8} aria-label="Más información"><svg viewBox="0 0 10 10" fill="#eee"><path d="M3 1v8l5-4z" /></svg></StatusBtn>
              </StatusLeft>
              <HScroll>
                <Chev d="left" w={1} />
                <Thumb $w={22} $h={14} />
                <Chev d="right" w={1} />
              </HScroll>
            </StatusBar>
          </DocArea>
        </Doc>

        <Side>
          <SideTop>
            <Collapse $justify="flex-end"><Double /></Collapse>
            <Collapse $justify="flex-end"><Double flip /></Collapse>
          </SideTop>
          <SideBody>
            <Dock>
              {DOCK.map((group) => (
                <DockGroup key={group[0][0]}>
                  <Grip />
                  <DockButtons>
                    {group.map(([name, art]) => (
                      <DockButton key={name} aria-label={name}><Ic s={18}>{art}</Ic></DockButton>
                    ))}
                  </DockButtons>
                </DockGroup>
              ))}
            </Dock>
            <Panel>
              <PanelTabs>
                <PanelTab $active>Propiedades</PanelTab>
                <PanelTab>Bibliotecas</PanelTab>
              </PanelTabs>
              <Section $pad="9px 8px 7px"><SectionTitle>No hay selección</SectionTitle></Section>
              <Section $pad="8px 0 5px 8px">
                <SectionTitle>Transformar</SectionTitle>
                <TransformGrid>
                  <Span2 $col={1} aria-label="Punto de referencia">
                    <svg width="19" height="19" viewBox="0 0 19 19" fill="none" stroke="#e6e6e6">
                      <path d="M4.500 2.500h3M11.500 2.500h3M4.500 16.500h3M11.500 16.500h3M2.500 4.500v3M2.500 11.500v3M16.500 4.500v3M16.500 11.500v3" />
                      {[2.5, 9.5, 16.5].map((y) => [2.5, 9.5, 16.5].map((x) => (
                        <rect key={x + "-" + y} x={x - 2} y={y - 2} width="4" height="4" fill={x === 9.5 && y === 9.5 ? "#fff" : "none"} />
                      )))}
                    </svg>
                  </Span2>
                  <FieldLabel $col={2} htmlFor="tx">X:</FieldLabel>
                  <Field id="tx" $w={53} disabled defaultValue="0 mm" />
                  <FieldLabel $col={4} htmlFor="tw">An.:</FieldLabel>
                  <Field id="tw" $w={53} disabled defaultValue="0 mm" />
                  <Span2 $col={6} aria-label="Vincular proporciones">
                    <Ic s={18} w={1.500}><path d="M7 8V5c0-4 6-4 6 0v3M7 12v3c0 4 6 4 6 0v-3M10 6v3M10 12v3M3 3l14 14" /></Ic>
                  </Span2>
                  <FieldLabel $col={2} htmlFor="ty">Y:</FieldLabel>
                  <Field id="ty" $w={53} disabled defaultValue="0 mm" />
                  <FieldLabel $col={4} htmlFor="th">Al.:</FieldLabel>
                  <Field id="th" $w={53} disabled defaultValue="0 mm" />
                  <FieldLabel $col={2} htmlFor="ta" aria-label="Ángulo">
                    <svg width="11" height="9" viewBox="0 0 11 9" fill="none" stroke="#e6e6e6"><path d="M9 .5 1 8.500h10M6 3.500c1.500 1 2 3 2 5" /></svg>:
                  </FieldLabel>
                  <AngleBox>
                    <Field id="ta" $w={53} disabled defaultValue="0°" />
                    <Chev />
                  </AngleBox>
                  <Flips>
                    <button aria-label="Reflejar horizontal"><Ic s={15}><path d="M1 4v12l6-6z" /><path d="M19 3v14l-7-7z" fill={L} /><path d="M10 0v20" strokeDasharray="2 2" /></Ic></button>
                    <button aria-label="Reflejar vertical"><Ic s={15}><path d="M3 1h14l-7 7z" fill={L} /><path d="M4 19h12l-6-6z" /><path d="M0 10h20" strokeDasharray="2 2" /></Ic></button>
                  </Flips>
                </TransformGrid>
                <MoreRow><Dots /></MoreRow>
              </Section>
              <Section $pad="10px 0 5px 8px">
                <SectionTitle>Apariencia</SectionTitle>
                <LookRows>
                  <LookRow>
                    <Swatch $size={17} aria-label="Relleno" />
                    <LookLabel>Relleno</LookLabel>
                  </LookRow>
                  <LookRow>
                    <Swatch $size={17} $stroke aria-label="Trazo" />
                    <LookLabel><Dotted htmlFor="pw">Trazo</Dotted></LookLabel>
                    <Spin aria-label="Ajustar trazo"><SpinIcon /></Spin>
                    <Field id="pw" $w={32} defaultValue="0,353 mm" />
                    <Drop $w={17} aria-label="Grosores"><Chev /></Drop>
                  </LookRow>
                  <LookRow>
                    <Checker aria-label="Opacidad" />
                    <LookLabel><Dotted htmlFor="po">Opacidad</Dotted></LookLabel>
                    <Field id="po" $w={47} defaultValue="100%" />
                    <Drop $w={17} aria-label="Opacidad"><Chev d="right" /></Drop>
                  </LookRow>
                </LookRows>
                <Fx>fx.</Fx>
                <MoreRow><Dots /></MoreRow>
              </Section>
              <Section $last $pad="13px 8px"><SectionTitle>Acciones rápidas</SectionTitle></Section>
            </Panel>
          </SideBody>
        </Side>
      </Body>

      <Marks aria-hidden="true">
        {MARKS.map(([kind, x, y]) => (
          <MarkText key={x + "-" + y} $kind={kind} x={x} y={y + 24} transform={`rotate(-23 ${x} ${y})`}>
            {kind === "slab" ? "RRCG" : "人人素材"}
          </MarkText>
        ))}
        <MarkText $kind="sans" x="970" y="56">RRCG</MarkText>
      </Marks>

      <Brand width="280" height="180" viewBox="0 0 280 180" aria-label="RRCG">
        <circle cx="186" cy="91" r="51" fill="#fff" />
        <g transform="scale(.33333)">
          <path d="M485 270 517 223 558 272 600 223 631 270 596 322H520z" fill="#e81c1c" />
          <g stroke="#141414" strokeWidth="4">
            <path d="M234 340A114 114 0 0 1 455 345L430 345A90 90 0 0 0 260 345z" fill="#a4a4a4" />
            <path d="M230 364H268V384H257A90 90 0 0 0 433 384H422V364H459A115 115 0 0 1 230 364z" fill="#2a9fdc" />
            <path d="M345 293 395 316 408 332V360L398 371 409 384V406L386 420V388L368 376V400L360 406V436L345 446 330 436V406L322 400V376L304 388V420L281 406V384L292 371 282 360V332L295 316z" fill="#2a9fdc" />
            <path d="M368 336 388 344V356L368 364zM322 336 302 344V356L322 364z" fill="#4f5a60" />
            <path d="M330 346V408M360 346V408M330 346 306 330M360 346 384 330" fill="none" />
          </g>
        </g>
        <BrandText $size={38} x="162" y="126">RRCG</BrandText>
        <BrandText $size={28} x="162" y="147">人人素材</BrandText>
      </Brand>
    </Shell>
  );
}
